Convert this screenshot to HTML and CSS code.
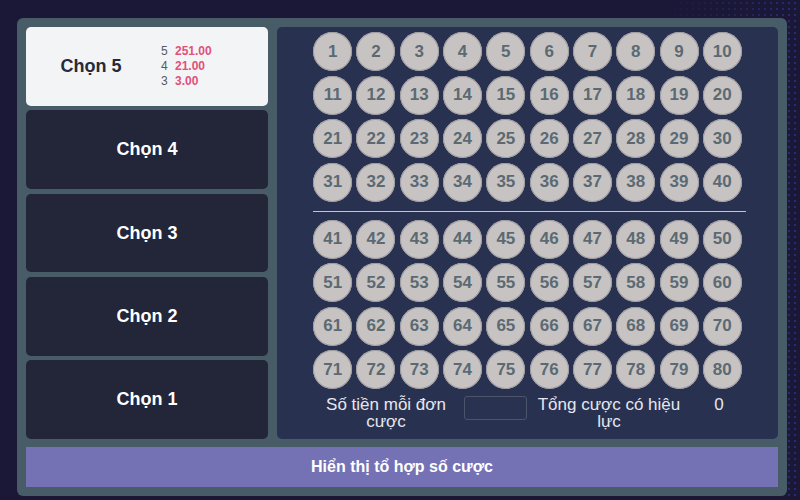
FILE: index.html
```html
<html>
<head>
<meta charset="utf-8">
<title>Chọn số</title>
<link rel="stylesheet" href="styles.css">
</head>
<body>
<div class="board">
    <div class="top">
        <div class="picks">
            <div class="pick active">
                <div class="pick-name">Chọn 5</div>
                <div class="odds">
                    <div><span class="hit">5</span><span class="pay">251.00</span></div>
                    <div><span class="hit">4</span><span class="pay">21.00</span></div>
                    <div><span class="hit">3</span><span class="pay">3.00</span></div>
                </div>
            </div>
            <div class="pick"><div class="pick-name">Chọn 4</div></div>
            <div class="pick"><div class="pick-name">Chọn 3</div></div>
            <div class="pick"><div class="pick-name">Chọn 2</div></div>
            <div class="pick"><div class="pick-name">Chọn 1</div></div>
        </div>
        <div class="numbers">
            <div class="balls first">
                <span class="ball">1</span><span class="ball">2</span><span class="ball">3</span><span class="ball">4</span><span class="ball">5</span>
                <span class="ball">6</span><span class="ball">7</span><span class="ball">8</span><span class="ball">9</span><span class="ball">10</span>
                <span class="ball">11</span><span class="ball">12</span><span class="ball">13</span><span class="ball">14</span><span class="ball">15</span>
                <span class="ball">16</span><span class="ball">17</span><span class="ball">18</span><span class="ball">19</span><span class="ball">20</span>
                <span class="ball">21</span><span class="ball">22</span><span class="ball">23</span><span class="ball">24</span><span class="ball">25</span>
                <span class="ball">26</span><span class="ball">27</span><span class="ball">28</span><span class="ball">29</span><span class="ball">30</span>
                <span class="ball">31</span><span class="ball">32</span><span class="ball">33</span><span class="ball">34</span><span class="ball">35</span>
                <span class="ball">36</span><span class="ball">37</span><span class="ball">38</span><span class="ball">39</span><span class="ball">40</span>
            </div>
            <div class="divider"></div>
            <div class="balls">
                <span class="ball">41</span><span class="ball">42</span><span class="ball">43</span><span class="ball">44</span><span class="ball">45</span>
                <span class="ball">46</span><span class="ball">47</span><span class="ball">48</span><span class="ball">49</span><span class="ball">50</span>
                <span class="ball">51</span><span class="ball">52</span><span class="ball">53</span><span class="ball">54</span><span class="ball">55</span>
                <span class="ball">56</span><span class="ball">57</span><span class="ball">58</span><span class="ball">59</span><span class="ball">60</span>
                <span class="ball">61</span><span class="ball">62</span><span class="ball">63</span><span class="ball">64</span><span class="ball">65</span>
                <span class="ball">66</span><span class="ball">67</span><span class="ball">68</span><span class="ball">69</span><span class="ball">70</span>
                <span class="ball">71</span><span class="ball">72</span><span class="ball">73</span><span class="ball">74</span><span class="ball">75</span>
                <span class="ball">76</span><span class="ball">77</span><span class="ball">78</span><span class="ball">79</span><span class="ball">80</span>
            </div>
            <div class="info">
                <div class="label amount-label">Số tiền mỗi đơn cược</div>
                <input class="amount" type="text">
                <div class="label total-label">Tổng cược có hiệu lực</div>
                <div class="label total">0</div>
            </div>
        </div>
    </div>
    <div class="combo">Hiển thị tổ hợp số cược</div>
</div>
</body>
</html>
```

FILE: styles.css
```css
html, body {
    margin: 0;
    height: 100%;
}
body {
    font-family: "Liberation Sans", Arial, sans-serif;
    background:
        linear-gradient(90deg, #1a1737 82%, rgba(26, 23, 55, 0.6)),
        radial-gradient(circle, #3550c8 1px, transparent 1.6px) 0 0 / 6px 6px,
        #1a1737;
    overflow: hidden;
}
.board {
    box-sizing: border-box;
    width: 770px;
    height: 478px;
    margin: 18px 0 0 17px;
    padding: 9px;
    background: #485c67;
    border-radius: 6px;
    display: flex;
    flex-direction: column;
    gap: 8px;
}
.top {
    display: flex;
    gap: 9px;
    height: 413px;
}

/* left column: bet types */
.picks {
    width: 242px;
    display: flex;
    flex-direction: column;
    gap: 4.5px;
}
.pick {
    flex: 1;
    background: #222638;
    border-radius: 5px;
    display: flex;
    align-items: center;
    justify-content: center;
    color: #ffffff;
}
.pick-name {
    font-size: 18px;
    font-weight: bold;
}
.pick.active {
    background: #f3f4f6;
    color: #262a3a;
    justify-content: flex-start;
}
.pick.active .pick-name {
    width: 130px;
    text-align: center;
}
.odds {
    padding-left: 5px;
    font-size: 12px;
    line-height: 15px;
}
.hit {
    color: #555a66;
    display: inline-block;
    width: 14px;
}
.pay {
    color: #e2507c;
    font-weight: bold;
}

/* right panel: number board */
.numbers {
    flex: 1;
    background: #293151;
    border-radius: 5px;
    padding-top: 5px;
    display: flex;
    flex-direction: column;
    align-items: center;
}
.balls {
    display: grid;
    grid-template-columns: repeat(10, 39px);
    gap: 4.5px 4.3px;
}
.ball {
    width: 39px;
    height: 39px;
    border-radius: 50%;
    background: #c7c3c3;
    box-shadow: inset 0 0 0 1px #9f9ca0;
    color: #5b6a72;
    font-size: 17px;
    font-weight: bold;
    display: flex;
    align-items: center;
    justify-content: center;
}
.divider {
    width: 433px;
    height: 1px;
    background: #c3c6d2;
    margin: 9px 0 8px 4px;
}
.info {
    align-self: stretch;
    display: flex;
    align-items: flex-start;
    padding-left: 45px;
    margin-top: 7px;
}
.label {
    color: #e6e7ec;
    font-size: 17px;
    line-height: 17px;
    text-align: center;
}
.amount-label {
    width: 128px;
}
.amount {
    box-sizing: border-box;
    width: 63px;
    height: 24px;
    margin: 0 6px 0 14px;
    background: #2a3252;
    border: 1px solid #4b5468;
    border-radius: 3px;
}
.total-label {
    width: 152px;
}
.total {
    width: 30px;
    margin-left: 19px;
}

/* bottom bar */
.combo {
    height: 40px;
    background: #7472b4;
    color: #ffffff;
    font-size: 16px;
    font-weight: bold;
    display: flex;
    align-items: center;
    justify-content: center;
}
```
